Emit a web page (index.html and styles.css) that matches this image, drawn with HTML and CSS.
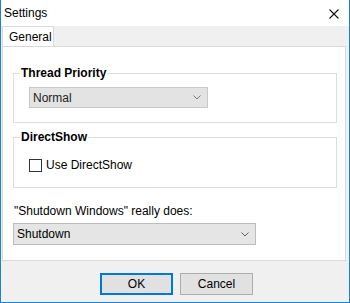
FILE: index.html
```html
<!DOCTYPE html>
<html lang="en">
<head>
  <meta charset="UTF-8">
  <title>Settings</title>
  <link rel="stylesheet" href="styles.css">
</head>
<body>
  <div class="window">
    <!-- Title Bar -->
    <div class="titlebar">
      <span class="title">Settings</span>
      <svg class="close" width="10" height="10" viewBox="0 0 10 10">
        <path d="M0.5 0.5 L9.5 9.5 M9.5 0.5 L0.5 9.5" stroke="#111" stroke-width="1.1" fill="none"/>
      </svg>
    </div>

    <!-- Tabs -->
    <div class="tabs">
      <div class="tab active">General</div>
    </div>

    <div class="panel">
      <div class="group first">
        <div class="group-title">Thread Priority</div>
        <div class="combo disabled narrow">
          <span>Normal</span>
          <svg width="8" height="5" viewBox="0 0 8 5"><path d="M0.5 0.5 L4 4 L7.5 0.5" stroke="#7a7a7a" fill="none"/></svg>
        </div>
      </div>

      <div class="group second">
        <div class="group-title">DirectShow</div>
        <label class="check">
          <span class="box"></span>
          <span>Use DirectShow</span>
        </label>
      </div>

      <div class="field-label">"Shutdown Windows" really does:</div>
      <div class="combo wide">
        <span>Shutdown</span>
        <svg width="8" height="5" viewBox="0 0 8 5"><path d="M0.5 0.5 L4 4 L7.5 0.5" stroke="#606060" fill="none"/></svg>
      </div>
    </div>

    <!-- Dialog Buttons -->
    <div class="buttons">
      <button class="btn default">OK</button>
      <button class="btn">Cancel</button>
    </div>
  </div>
</body>
</html>
```

FILE: styles.css
```css
/* General */
body {
  margin: 0;
  font-family: "Liberation Sans", Arial, sans-serif;
  font-size: 12px;
  color: #000;
  background: #fff;
}

.window {
  width: 350px;
  height: 303px;
  box-sizing: border-box;
  background: #f0f0f0;
  border: 1px solid #1883d7;
  border-top: none;
}

/* Title Bar */
.titlebar {
  height: 26px;
  background: #fff;
  display: flex;
  align-items: center;
  justify-content: space-between;
  padding: 0 10px 0 3px;
}

.title {
  line-height: 16px;
  margin-top: -1px;
}

.close {
  margin-top: 1px;
}

/* Tabs */
.tabs {
  height: 20px;
  display: flex;
  padding-left: 1px;
}

.tab {
  width: 52px;
  height: 20px;
  box-sizing: border-box;
  padding: 2px 0 0 6px;
  line-height: 16px;
  background: #fff;
  border: 1px solid #d9d9d9;
  border-bottom: none;
}

/* Tab Panel */
.panel {
  width: 344px;
  height: 215px;
  box-sizing: border-box;
  margin-left: 1px;
  background: #fff;
  border: 1px solid #d9d9d9;
  padding: 26px 8px 0 10px;
}

/* Group Boxes */
.group {
  border: 1px solid #dcdcdc;
  height: 48px;
  padding: 0 14px 0 15px;
}

.group.second {
  margin-top: 14px;
  height: 49px;
}

.group-title {
  width: max-content;
  margin: -8px 0 0 -9px;
  padding: 0 1px;
  background: #fff;
  font-weight: bold;
  line-height: 15px;
}

/* Combo Boxes */
.combo {
  height: 21px;
  box-sizing: border-box;
  display: flex;
  align-items: center;
  justify-content: space-between;
  padding: 0 6px 0 3px;
  background: #e5e5e5;
  border: 1px solid #bcbcbc;
}

.combo.narrow {
  width: 179px;
  margin-top: 6px;
}

.combo.disabled {
  background: #e3e3e3;
  border-color: #c8c8c8;
  color: #222;
}

.combo.wide {
  width: 243px;
  height: 22px;
  margin-top: 4px;
}

/* Checkbox */
.check {
  display: flex;
  align-items: center;
  gap: 4px;
  margin-top: 13px;
}

.check .box {
  width: 13px;
  height: 13px;
  box-sizing: border-box;
  border: 1px solid #333;
  background: #fff;
}

.field-label {
  margin-top: 16px;
  line-height: 15px;
  padding-left: 1px;
}

/* Buttons */
.buttons {
  display: flex;
  gap: 7px;
  padding: 12px 0 0 99px;
}

.btn {
  width: 73px;
  height: 22px;
  box-sizing: border-box;
  font-family: inherit;
  font-size: 12px;
  color: #000;
  background: #e1e1e1;
  border: 1px solid #adadad;
  padding: 0;
}

.btn.default {
  border: 2px solid #0078d7;
}
```
